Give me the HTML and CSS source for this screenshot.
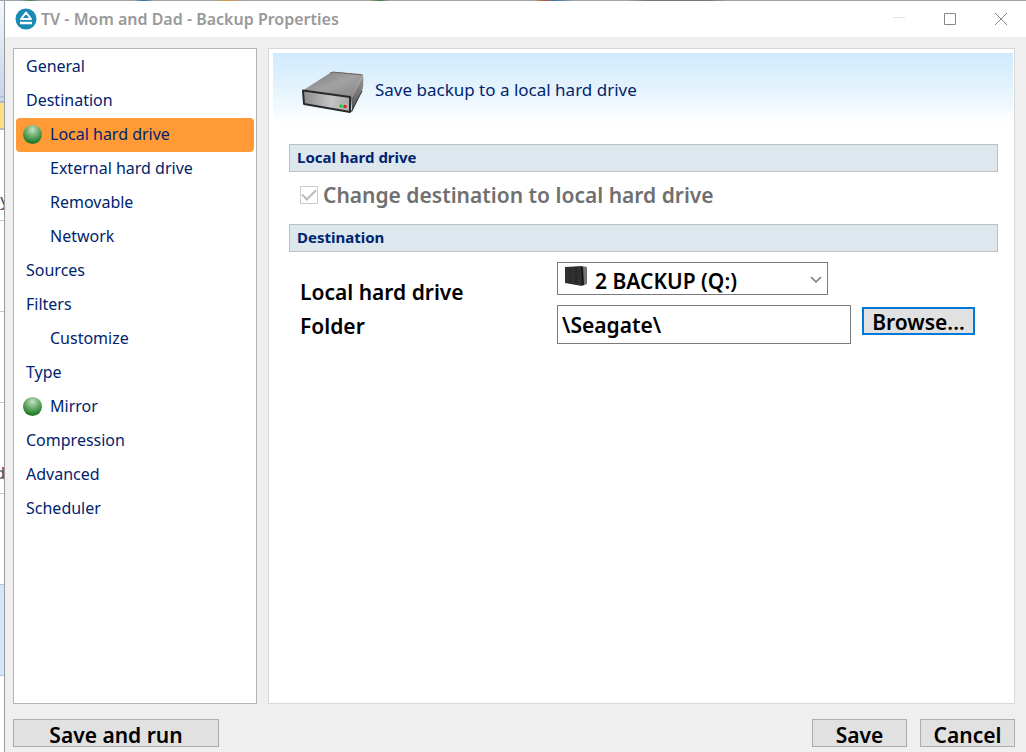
FILE: index.html
```html
<!DOCTYPE html>
<html lang="en">
<head>
<meta charset="utf-8">
<title>TV - Mom and Dad - Backup Properties</title>
<link rel="stylesheet" href="styles.css">
</head>
<body>
<div class="desktop">
  <div class="behind-top"></div>
  <div class="behind" aria-hidden="true">
    <div class="behind-ribbon"></div>
    <div class="behind-tab"></div>
    <div class="behind-row behind-text">by</div>
    <div class="behind-row"></div>
    <div class="behind-row"></div>
    <div class="behind-row behind-text">d'</div>
    <div class="behind-row"></div>
    <div class="behind-row behind-selected"></div>
  </div>
  <div class="window">
    <header class="titlebar">
      <svg class="app-icon" viewBox="0 0 22 22"><circle cx="11" cy="11" r="10.5" fill="#1a8ab5"/><path d="M11 4.500 16 11H6Z" fill="#1a8ab5" stroke="#fff" stroke-width="2" stroke-linejoin="round"/><path d="M5 15h12" stroke="#fff" stroke-width="2.500"/></svg>
      <h1 class="title">TV - Mom and Dad - Backup Properties</h1>
      <div class="window-buttons">
        <button class="window-button" aria-label="Minimize"><svg viewBox="0 0 14 14"><path d="M1 5.500h12" stroke="#e2e2e2"/></svg></button>
        <button class="window-button" aria-label="Maximize"><svg viewBox="0 0 14 14"><path d="M1.500 1.500h11v11h-11z" fill="none" stroke="#888"/></svg></button>
        <button class="window-button" aria-label="Close"><svg viewBox="0 0 14 14"><path d="m1 1 12 12M13 1 1 13" stroke="#888"/></svg></button>
      </div>
    </header>
    <div class="content">
      <nav class="nav">
        <a class="nav-item" href="#general">General</a>
        <a class="nav-item" href="#destination">Destination</a>
        <a class="nav-item nav-sub nav-active" href="#local"><span class="dot"></span>Local hard drive</a>
        <a class="nav-item nav-sub" href="#external">External hard drive</a>
        <a class="nav-item nav-sub" href="#removable">Removable</a>
        <a class="nav-item nav-sub" href="#network">Network</a>
        <a class="nav-item" href="#sources">Sources</a>
        <a class="nav-item" href="#filters">Filters</a>
        <a class="nav-item nav-sub" href="#customize">Customize</a>
        <a class="nav-item" href="#type">Type</a>
        <a class="nav-item nav-sub" href="#mirror"><span class="dot"></span>Mirror</a>
        <a class="nav-item" href="#compression">Compression</a>
        <a class="nav-item" href="#advanced">Advanced</a>
        <a class="nav-item" href="#scheduler">Scheduler</a>
      </nav>
      <main class="panel">
        <div class="banner">
          <svg class="drive" viewBox="0 0 64 44">
            <defs>
              <linearGradient id="top" x1="0" y1="0" x2="1" y2="1"><stop offset="0" stop-color="#777"/><stop offset=".5" stop-color="#a2a2a2"/><stop offset="1" stop-color="#858585"/></linearGradient>
              <linearGradient id="front" x1="0" y1="0" x2="1" y2="0"><stop offset="0" stop-color="#8c8c8c"/><stop offset=".6" stop-color="#c4c4c4"/><stop offset="1" stop-color="#aaa"/></linearGradient>
              <linearGradient id="side" x1="0" y1="0" x2="0" y2="1"><stop offset="0" stop-color="#999"/><stop offset="1" stop-color="#505050"/></linearGradient>
            </defs>
            <path d="M1 21 29 3q2-1 5-1l27 2q1 0 1 2L50 28Z" fill="url(#top)"/>
            <path d="m29 3 3-1 29 3" fill="none" stroke="#686868"/>
            <path d="M50 27 62 5q1 11-1 16L51 42Z" fill="url(#side)"/>
            <path d="M2 20.500 49 27v15L3 34Z" fill="url(#front)" stroke="#292929" stroke-width="2" stroke-linejoin="round"/>
            <path d="m51 27 10-20" stroke="#bbb" stroke-width=".7"/>
            <path d="M50 42 61 21" stroke="#333"/>
            <circle cx="40" cy="36" r="1.700" fill="#13ce32"/><circle cx="44" cy="36.500" r="1.700" fill="#e32127"/>
          </svg>
          <p class="banner-text">Save backup to a local hard drive</p>
        </div>
        <div class="sections">
          <h2 class="section-title">Local hard drive</h2>
          <label class="check"><input class="check-box" type="checkbox" checked disabled>Change destination to local hard drive</label>
          <h2 class="section-title">Destination</h2>
          <div class="form">
            <div class="labels">
              <label for="drive">Local hard drive</label>
              <label for="folder">Folder</label>
            </div>
            <div class="fields">
              <div class="select-wrap">
                <select class="select" id="drive"><option>2 BACKUP (Q:)</option></select>
                <svg class="disk" viewBox="0 0 22 21"><path d="m0 1 17-1v20L0 17Z" fill="#303030"/><path d="m17 0 5 1v17l-5 2Z" fill="#747474"/><path d="m17 1 1 18" stroke="#161616" stroke-width="2"/><path d="M5 2v15M11 1v17" stroke="#222"/></svg>
                <svg class="chevron" viewBox="0 0 12 8"><path d="m1 1 5 5 5-5" fill="none" stroke="#777" stroke-width="1.500"/></svg>
              </div>
              <input class="folder" id="folder" type="text" value="\Seagate\">
            </div>
            <button class="button browse">Browse...</button>
          </div>
        </div>
      </main>
    </div>
    <footer class="footer">
      <button class="button run">Save and run</button>
      <button class="button action">Save</button>
      <button class="button action">Cancel</button>
    </footer>
  </div>
</div>
</body>
</html>
```
FILE: styles.css
```css
* { box-sizing: border-box; }
body { margin: 0; font-family: "Noto Sans", sans-serif; color: #000; }
.desktop { display: grid; grid-template: 1px 1fr / 4px minmax(0, 1fr); min-height: 100vh; }
.behind-top { grid-column: 1 / -1; background: linear-gradient(90deg, #9ba3ad 0 2%, #4a844a 3%, #a4a4a4 4% 13%, #386aa7 14%, #a4a4a4 15% 21%, #cf983b 22%, #a4a4a4 24% 36%, #397a43 37%, #a4a4a4 38% 52%, #b85b34 53%, #3977a6 54%, #a4a4a4 56% 61%, #777 63% 69%, #a1a3aa 71%); }
.behind { overflow: hidden; background: #fff; font-size: 17px; color: #384866; }
.behind-ribbon { height: 102px; background: linear-gradient(#f4f8fd, #c6d5eb 93%, #aab9d3 94%, #d8e3f1 96%, #9cabc6); }
.behind-tab { height: 27px; background: #ffdf82; border-bottom: 2px solid #b8bbc4; }
.behind-row { display: flex; justify-content: flex-end; align-items: flex-end; height: 91px; padding-bottom: 9px; border-bottom: 1px solid #bcc4dc; }
.behind-text { margin-right: -5px; }
.behind-selected { background: #d3e5fd; }
.window { display: flex; flex-direction: column; background: #efefef; border-left: 1px solid #999; }
.titlebar { display: flex; align-items: center; height: 36px; padding-left: 10px; background: #fff; }
.app-icon { width: 22px; height: 22px; margin-right: 4px; }
.title { margin: 0; font-size: 16px; font-weight: 600; line-height: 20px; color: #999; }
.window-buttons { display: flex; margin-left: auto; }
.window-button { display: grid; place-items: center; width: 51px; height: 34px; padding: 0; border: 0; background: none; }
.window-button svg { width: 14px; height: 14px; }
.content { display: grid; grid-template-columns: 244px minmax(0, 1fr); gap: 11px; flex: 1; padding: 11px 11px 0 8px; }
.nav { padding: 1px 2px; background: #fff; border: 1px solid #b3b3ba; }
.nav-item { display: flex; align-items: center; height: 34px; padding: 0 0 2px 10px; border-radius: 4px; font-size: 16px; color: #00246e; text-decoration: none; }
.nav-sub { padding-left: 34px; }
.nav-active { background: #ff9a36; }
.dot { width: 19px; height: 19px; margin: 0 8px 0 -27px; border-radius: 50%; background: radial-gradient(circle at 50% 25%, #c5e3c5 0, #75b175 35%, #2a8430 70%, #14581b 100%); }
.panel { padding: 4px 1px; background: #fff; border: 1px solid #d9d9d9; }
.banner { display: flex; align-items: center; gap: 10px; height: 75px; margin-left: 3px; padding: 0 0 2px 28px; background: linear-gradient(#cfeaff, #e3f3fd 45%, #fff 95%); }
.drive { width: 64px; height: 44px; margin-top: 4px; }
.banner-text { margin: 0; font-size: 17px; color: #00246e; }
.sections { padding: 16px 15px 0 19px; }
.section-title { height: 28px; margin: 0; padding-left: 7px; border: 1px solid #bdbfc1; background: #dce7ee; font-size: 15px; line-height: 24px; font-weight: 700; color: #00246e; }
.check { display: flex; align-items: center; gap: 5px; height: 52px; padding: 0 0 7px 11px; font-size: 21px; font-weight: 600; color: #707070; }
.check-box { appearance: none; width: 18px; height: 18px; margin: 0; border: 1px solid #ccc; background: #fff; display: grid; place-items: center; }
.check-box::before { content: ""; width: 12px; height: 6px; margin-top: -4px; border: solid #bbb; border-width: 0 0 2px 2px; transform: rotate(-45deg); }
.form { display: flex; align-items: flex-start; padding: 10px 0 0 11px; font-size: 21px; font-weight: 600; }
.labels { display: grid; width: 257px; padding-top: 13px; line-height: 34px; }
.fields { display: grid; gap: 10px; width: 294px; }
.select-wrap { position: relative; width: 271px; }
.select { appearance: none; display: block; width: 100%; height: 33px; padding: 4px 30px 0 37px; border: 1px solid #7a7a7a; border-radius: 0; background: #fff; font: inherit; color: #000; }
.disk { position: absolute; top: 4px; left: 8px; width: 22px; height: 21px; }
.chevron { position: absolute; top: 14px; right: 6px; width: 12px; height: 8px; }
.folder { width: 100%; height: 39px; padding: 0 4px; border: 1px solid #7a7a7a; font: inherit; color: #000; }
.button { height: 28px; padding: 3px 0 0; border: 1px solid #adadad; border-radius: 0; background: #e1e1e1; font: 600 21px/22px "Noto Sans", sans-serif; color: #000; }
.browse { width: 113px; margin: 45px 0 0 11px; padding-top: 2px; border: 2px solid #0078d7; }
.footer { display: flex; gap: 13px; padding: 15px 11px 5px 8px; }
.run { width: 206px; margin-right: auto; }
.action { width: 95px; }
```
